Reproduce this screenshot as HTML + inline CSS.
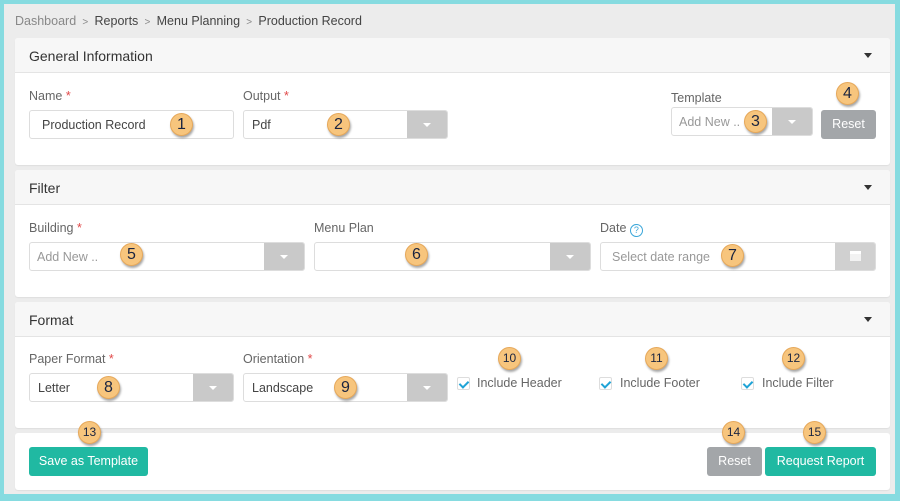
<!DOCTYPE html>
<html><head><style>
*{box-sizing:border-box;margin:0;padding:0}
body{width:900px;height:501px;background:#86dbe0;font-family:"Liberation Sans",sans-serif;position:relative;overflow:hidden;color:#444}
#main{position:absolute;left:4px;top:4px;width:891px;height:490px;background:#ececec}
.a{position:absolute}
.panel{position:absolute;left:15px;width:875px;background:#fff;border-radius:3px;box-shadow:0 1px 1px rgba(0,0,0,.06)}
.ph{height:35px;background:#f7f7f7;border-bottom:1px solid #e4e4e4;padding:10px 14px;font-size:14px;color:#333;position:relative;border-radius:3px 3px 0 0}
.ph:after{content:"";position:absolute;right:18px;top:15px;border:4px solid transparent;border-top:5px solid #333}
.lbl{position:absolute;font-size:12.5px;color:#666}
.lbl b{color:#e04848;font-weight:normal}
.inp{position:absolute;height:29px;border:1px solid #ddd;border-radius:3px;background:#fff;font-size:12.5px;padding:7px 11px;color:#444}
.ph2{color:#999}
.dd{position:absolute;right:0;top:0;bottom:0;width:40px;background:#c9c9c9;border-radius:0 2px 2px 0}
.dd:after{content:"";position:absolute;left:16px;top:12px;border:4px solid transparent;border-top:4px solid #fff}
.btn{position:absolute;height:29px;border-radius:3px;color:#fff;font-size:12.5px;text-align:center;line-height:29px}
.g{background:#a3a6a9}.t{background:#20b9a2}
.bd{position:absolute;width:23px;height:23px;border-radius:50%;background:#f7c57d;border:1px solid #e6a85a;box-shadow:1px 2px 2px rgba(0,0,0,.35);color:#1a2440;font-size:16px;text-align:center;line-height:21px}
.bd.s{font-size:12px}
.cb{position:absolute;width:13px;height:13px;border:1px solid #ddd;border-radius:2px;background:#fff}
.cb:after{content:"";position:absolute;left:3px;top:1px;width:4px;height:7px;border:solid #1fa3d6;border-width:0 2px 2px 0;transform:rotate(45deg)}
.ct{position:absolute;font-size:12.5px;color:#666}
</style></head><body>
<div id="main"></div>
<div class="a" style="left:15px;top:14px;font-size:12.5px;color:#444"><span style="color:#888">Dashboard</span> <span style="color:#888;font-size:10px">&nbsp;&gt;&nbsp;</span> Reports <span style="color:#888;font-size:10px">&nbsp;&gt;&nbsp;</span> Menu Planning <span style="color:#888;font-size:10px">&nbsp;&gt;&nbsp;</span> Production Record</div>

<div class="panel" style="top:38px;height:127px"><div class="ph">General Information</div></div>
<div class="panel" style="top:170px;height:127px"><div class="ph">Filter</div></div>
<div class="panel" style="top:302px;height:126px"><div class="ph">Format</div></div>
<div class="panel" style="top:433px;height:57px"></div>

<div class="lbl" style="left:29px;top:89px">Name <b>*</b></div>
<div class="inp" style="left:29px;top:110px;width:205px;padding-left:12px">Production Record</div>
<div class="lbl" style="left:243px;top:89px">Output <b>*</b></div>
<div class="inp" style="left:243px;top:110px;width:205px;padding-left:8px">Pdf<div class="dd"></div></div>
<div class="lbl" style="left:671px;top:91px">Template</div>
<div class="inp ph2" style="left:671px;top:107px;width:142px;padding-left:7px">Add New ..<div class="dd"></div></div>
<div class="btn g" style="left:821px;top:110px;width:55px">Reset</div>

<div class="lbl" style="left:29px;top:221px">Building <b>*</b></div>
<div class="inp ph2" style="left:29px;top:242px;width:276px;padding-left:7px">Add New ..<div class="dd"></div></div>
<div class="lbl" style="left:314px;top:221px">Menu Plan</div>
<div class="inp" style="left:314px;top:242px;width:277px"><div class="dd"></div></div>
<div class="lbl" style="left:600px;top:221px">Date <span style="display:inline-block;width:13px;height:13px;border:1px solid #3aa6d9;border-radius:50%;color:#3aa6d9;font-size:9px;text-align:center;line-height:11px;vertical-align:-1px">?</span></div>
<div class="inp ph2" style="left:600px;top:242px;width:276px">Select date range<div class="dd" style="background:#d0d0d0"></div></div>
<div class="a" style="left:850px;top:251px;width:11px;height:10px;background:#f2f2f2;border-top:3px solid #fff"></div>

<div class="lbl" style="left:29px;top:352px">Paper Format <b>*</b></div>
<div class="inp" style="left:29px;top:373px;width:205px;padding-left:8px">Letter<div class="dd"></div></div>
<div class="lbl" style="left:243px;top:352px">Orientation <b>*</b></div>
<div class="inp" style="left:243px;top:373px;width:205px;padding-left:8px">Landscape<div class="dd"></div></div>
<div class="cb" style="left:457px;top:377px"></div><div class="ct" style="left:477px;top:376px">Include Header</div>
<div class="cb" style="left:599px;top:377px"></div><div class="ct" style="left:620px;top:376px">Include Footer</div>
<div class="cb" style="left:741px;top:377px"></div><div class="ct" style="left:762px;top:376px">Include Filter</div>

<div class="btn t" style="left:29px;top:447px;width:119px">Save as Template</div>
<div class="btn g" style="left:707px;top:447px;width:55px">Reset</div>
<div class="btn t" style="left:765px;top:447px;width:111px">Request Report</div>

<div class="bd" style="left:170px;top:113px">1</div>
<div class="bd" style="left:327px;top:113px">2</div>
<div class="bd" style="left:744px;top:110px">3</div>
<div class="bd" style="left:836px;top:82px">4</div>
<div class="bd" style="left:120px;top:243px">5</div>
<div class="bd" style="left:405px;top:243px">6</div>
<div class="bd" style="left:721px;top:244px">7</div>
<div class="bd" style="left:97px;top:376px">8</div>
<div class="bd" style="left:334px;top:376px">9</div>
<div class="bd s" style="left:498px;top:347px">10</div>
<div class="bd s" style="left:645px;top:347px">11</div>
<div class="bd s" style="left:782px;top:347px">12</div>
<div class="bd s" style="left:78px;top:421px">13</div>
<div class="bd s" style="left:722px;top:421px">14</div>
<div class="bd s" style="left:803px;top:421px">15</div>
</body></html>
